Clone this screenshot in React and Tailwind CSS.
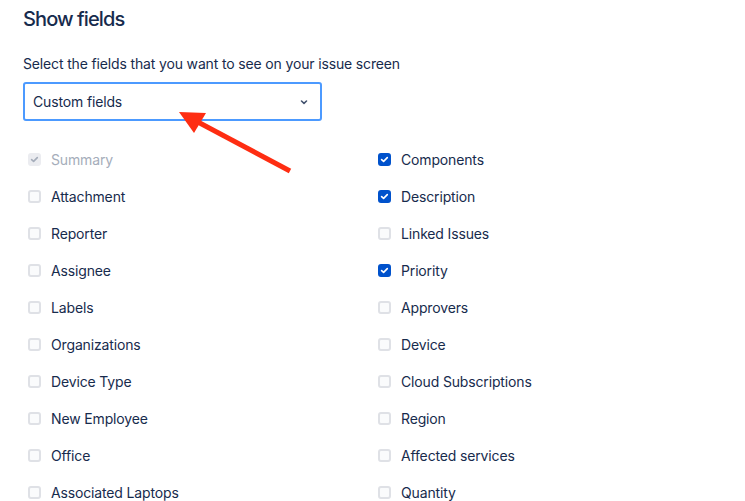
import React, { useState } from "react";

const left = [
  { name: "Summary", checked: true, disabled: true },
  { name: "Attachment" },
  { name: "Reporter" },
  { name: "Assignee" },
  { name: "Labels" },
  { name: "Organizations" },
  { name: "Device Type" },
  { name: "New Employee" },
  { name: "Office" },
  { name: "Associated Laptops" },
];

const right = [
  { name: "Components", checked: true },
  { name: "Description", checked: true },
  { name: "Linked Issues" },
  { name: "Priority", checked: true },
  { name: "Approvers" },
  { name: "Device" },
  { name: "Cloud Subscriptions" },
  { name: "Region" },
  { name: "Affected services" },
  { name: "Quantity" },
];

function Check({ field }) {
  const [on, setOn] = useState(!!field.checked);
  let box = "border-2 border-[#dfe1e6] bg-[#fafbfc]";
  if (field.disabled) box = "bg-[#ebecf0] border-2 border-[#ebecf0]";
  else if (on) box = "bg-[#0052cc] border-2 border-[#0052cc]";

  return (
    <label
      className="flex h-[37px] items-center gap-[10px] pl-[5px] cursor-pointer"
      onClick={() => !field.disabled && setOn(!on)}
    >
      <span className={"flex h-[13px] w-[13px] items-center justify-center rounded-[3px] " + box}>
        {(on || field.disabled) && (
          <svg width="9" height="9" viewBox="0 0 9 9" fill="none">
            <path
              d="M1.6 4.6 3.6 6.4 7.3 2.6"
              stroke={field.disabled ? "#a5adba" : "#ffffff"}
              strokeWidth="1.6"
              strokeLinecap="round"
              strokeLinejoin="round"
            />
          </svg>
        )}
      </span>
      <span
        className={
          "text-[14px] tracking-[-0.15px] " + (field.disabled ? "text-[#a5adba]" : "text-[#172b4d]")
        }
      >
        {field.name}
      </span>
    </label>
  );
}

export default function App() {
  return (
    <div
      className="relative h-[501px] w-[745px] overflow-hidden bg-white pl-[23px] pt-[6px]"
      style={{ fontFamily: "Inter, 'Noto Sans', sans-serif" }}
    >
      <h1 className="text-[20px] leading-[26px] font-medium tracking-[-0.9px] text-[#172b4d]">
        Show fields
      </h1>

      <p className="mt-[22px] text-[14px] leading-[20px] tracking-[-0.15px] text-[#172b4d]">
        Select the fields that you want to see on your issue screen
      </p>

      <div className="mt-[8px] flex h-[39px] w-[299px] items-center justify-between rounded-[3px] border-2 border-[#4c9aff] bg-white pl-[8px] pr-[11px]">
        <span className="text-[14px] tracking-[-0.15px] text-[#172b4d]">Custom fields</span>
        <svg width="10" height="10" viewBox="0 0 10 10" fill="none">
          <path d="M2.5 4 5 6.3 7.5 4" stroke="#42526e" strokeWidth="1.6" strokeLinecap="round" strokeLinejoin="round" />
        </svg>
      </div>

      <div className="mt-[20px] grid grid-cols-[350px_1fr]">
        <div className="flex flex-col">
          {left.map((f) => (
            <Check key={f.name} field={f} />
          ))}
        </div>
        <div className="flex flex-col">
          {right.map((f) => (
            <Check key={f.name} field={f} />
          ))}
        </div>
      </div>

      <svg className="absolute left-0 top-0" width="745" height="501" viewBox="0 0 745 501">
        <line x1="290" y1="171" x2="196" y2="121" stroke="#fe2d12" strokeWidth="5" />
        <polygon points="179,112 206,113 194,133" fill="#fe2d12" />
      </svg>
    </div>
  );
}
